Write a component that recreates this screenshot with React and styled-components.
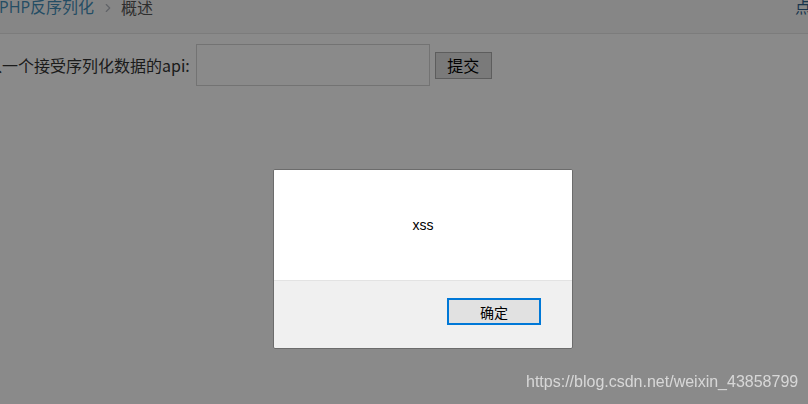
import React from 'react';
import styled, { createGlobalStyle } from 'styled-components';
import { ChevronRight } from 'lucide-react';

const GlobalStyle = createGlobalStyle`
  html, body {
    margin: 0;
    padding: 0;
    background: #ffffff;
    overflow: hidden;
  }
  body {
    font-family: "Open Sans", "Noto Sans CJK SC", sans-serif;
    color: #393939;
  }
`;

const Page = styled.div`
  width: 808px;
  height: 404px;
  overflow: hidden;
  background: #ffffff;
`;

const Breadcrumbs = styled.div`
  height: 33px;
  border-bottom: 1px solid #e5e5e5;
  background: #f8f8f8;
  display: flex;
  align-items: flex-start;
  justify-content: space-between;
  overflow: hidden;
  font-size: 16px;
  line-height: 16px;
`;

const Crumbs = styled.div`
  display: flex;
  align-items: center;
  margin-top: -1px;
  margin-left: -1px;
`;

const CrumbLink = styled.span`
  color: #438eb9;
`;

const Sep = styled.span`
  color: #b2b6bf;
  display: flex;
  align-items: center;
  margin: 1px 6px 0 7px;
`;

const CrumbCurrent = styled.span`
  color: #555555;
  font-family: "Noto Sans CJK SC", sans-serif;
`;

const RightLink = styled.span`
  color: #2d5f8c;
  font-family: "Noto Sans CJK SC", sans-serif;
  margin-top: -2px;
  margin-right: -19px;
  white-space: nowrap;
  width: 32px;
`;

const Content = styled.div`
  padding: 10px 0 0 0;
  margin-left: -30px;
`;

const Form = styled.form`
  display: flex;
  align-items: center;
`;

const Label = styled.label`
  font-size: 16px;
  color: #333333;
  font-family: "Noto Sans CJK SC", sans-serif;
  margin-right: 6px;
`;

const Input = styled.input`
  width: 234px;
  height: 42px;
  box-sizing: border-box;
  border: 1px solid #d5d5d5;
  background: #ffffff;
  margin: 0 5px 0 0;
  padding: 0 6px;
`;

const SubmitBtn = styled.button`
  width: 57px;
  height: 27px;
  box-sizing: border-box;
  border: 1px solid #adadad;
  background: #e1e1e1;
  color: #000000;
  font-size: 16px;
  font-family: "Noto Sans CJK SC", sans-serif;
  padding: 0;
  line-height: 24px;
`;

const Overlay = styled.div`
  position: fixed;
  inset: 0;
  background: rgba(0, 0, 0, 0.46);
`;

const Dialog = styled.div`
  position: fixed;
  left: 273px;
  top: 169px;
  width: 300px;
  height: 180px;
  box-sizing: border-box;
  border: 1px solid #6c6c6c;
  border-radius: 2px;
  background: #f0f0f0;
  display: flex;
  flex-direction: column;
  overflow: hidden;
`;

const DialogBody = styled.div`
  height: 111px;
  background: #ffffff;
  border-bottom: 1px solid #e3e3e3;
  display: flex;
  align-items: center;
  justify-content: center;
  font-family: "Liberation Sans", Arial, sans-serif;
  font-size: 14px;
  color: #000000;
  box-sizing: border-box;
`;

const DialogFooter = styled.div`
  flex: 1;
  display: flex;
  justify-content: flex-end;
  align-items: flex-start;
  padding: 17px 31px 0 0;
`;

const OkBtn = styled.button`
  width: 94px;
  height: 27px;
  box-sizing: border-box;
  border: 2px solid #0078d7;
  background: #e1e1e1;
  color: #000000;
  font-family: "Noto Sans CJK SC", sans-serif;
  font-size: 14px;
  padding: 0;
  line-height: 20px;
`;

const Watermark = styled.div`
  position: fixed;
  left: 526px;
  top: 373px;
  font-family: "Liberation Sans", Arial, sans-serif;
  font-size: 16px;
  color: rgba(255, 255, 255, 0.66);
  white-space: nowrap;
`;

export default function App() {
  return (
    <>
      <GlobalStyle />
      <Page>
        <Breadcrumbs>
          <Crumbs>
            <CrumbLink>PHP反序列化</CrumbLink>
            <Sep>
              <ChevronRight size={14} strokeWidth={2} />
            </Sep>
            <CrumbCurrent>概述</CrumbCurrent>
          </Crumbs>
          <RightLink>点击</RightLink>
        </Breadcrumbs>
        <Content>
          <Form onSubmit={e => e.preventDefault()}>
            <Label>输入一个接受序列化数据的api:</Label>
            <Input type="text" />
            <SubmitBtn type="submit">提交</SubmitBtn>
          </Form>
        </Content>
      </Page>
      <Overlay />
      <Dialog>
        <DialogBody>xss</DialogBody>
        <DialogFooter>
          <OkBtn>确定</OkBtn>
        </DialogFooter>
      </Dialog>
      <Watermark>https://blog.csdn.net/weixin_43858799</Watermark>
    </>
  );
}
